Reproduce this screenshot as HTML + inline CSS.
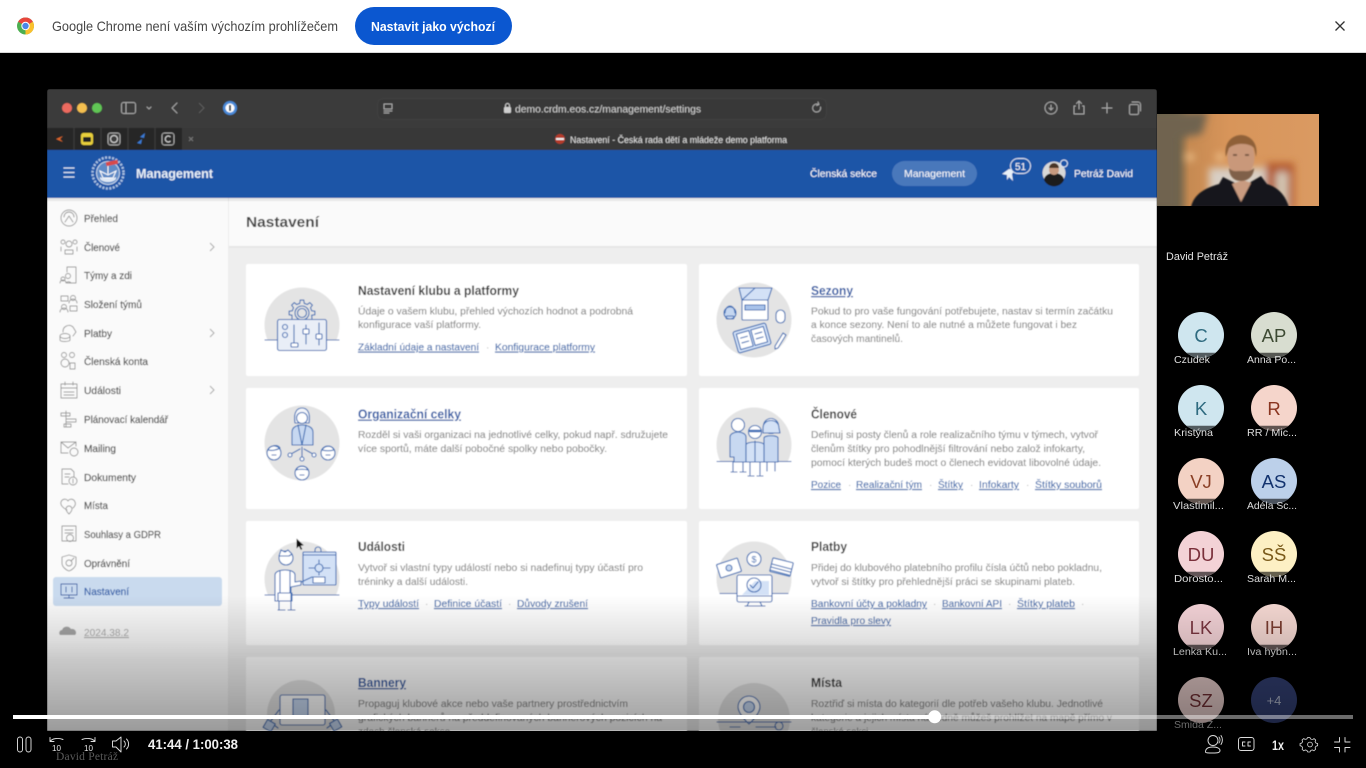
<!DOCTYPE html>
<html lang="cs"><head><meta charset="utf-8"><title>Nastavení</title>
<style>
html,body{margin:0;padding:0;background:#000;width:1366px;height:768px;overflow:hidden}
svg{display:block;position:absolute;left:0;top:0}
text{font-family:"Liberation Sans",sans-serif;white-space:pre}
.t{font-size:13px;font-weight:700;fill:#3a3a3a}
.tl{font-size:13px;font-weight:700;fill:#2f5ca6;text-decoration:underline}
.d{font-size:10.5px;fill:#8b8b8b;stroke:#8b8b8b;stroke-width:.12}
.l{font-size:10.5px;fill:#3a68ab;text-decoration:underline;stroke:#3a68ab;stroke-width:.12}
.o{font-size:10px;fill:#b5b5b5}
.s{font-size:10.5px;fill:#4d4d4d;stroke:#4d4d4d;stroke-width:.18}
.n{font-size:10.5px;fill:#dedede}
.i{font-size:18.5px;text-anchor:middle}
.w{font-size:10.5px;fill:#fff}
.ic{fill:none;stroke:#3f6fb5;stroke-width:1.1;stroke-linecap:round;stroke-linejoin:round}
.si{fill:none;stroke:#969696;stroke-width:.9;stroke-linecap:round;stroke-linejoin:round}
.tb{fill:none;stroke:#a8a8a8;stroke-width:1;stroke-linecap:round;stroke-linejoin:round}
.ct{fill:none;stroke:#dcdcdc;stroke-width:.95;stroke-linecap:round;stroke-linejoin:round}
</style></head><body>
<svg width="1366" height="768" viewBox="0 0 1366 768" xmlns="http://www.w3.org/2000/svg">
<defs>
<clipPath id="scr"><path d="M50 89H1154Q1157 89 1157 92V731H47V92Q47 89 50 89Z"/></clipPath>
<clipPath id="dome5"><rect x="260" y="530" width="85" height="65"/></clipPath>
<clipPath id="dome6"><rect x="712" y="530" width="85" height="64"/></clipPath>
<clipPath id="dome1"><rect x="260" y="280" width="85" height="60"/></clipPath>
<clipPath id="dome4"><rect x="712" y="400" width="85" height="62"/></clipPath>
<clipPath id="vid"><rect x="1157" y="114" width="162" height="92"/></clipPath>
<linearGradient id="fade" x1="0" y1="0" x2="0" y2="1"><stop offset="0" stop-color="#000" stop-opacity="0"/><stop offset=".33" stop-color="#000" stop-opacity=".12"/><stop offset=".48" stop-color="#000" stop-opacity=".2"/><stop offset="1" stop-color="#000" stop-opacity=".38"/></linearGradient>
<linearGradient id="bg" x1="0" y1="0" x2="1" y2="0"><stop offset="0" stop-color="#5b5a44"/><stop offset=".12" stop-color="#6f6448"/><stop offset=".2" stop-color="#c68a52"/><stop offset=".45" stop-color="#d8955a"/><stop offset="1" stop-color="#da9a62"/></linearGradient>
<filter id="b1" x="-5%" y="-5%" width="110%" height="110%"><feGaussianBlur stdDeviation=".45"/></filter>
<filter id="b6" x="-30%" y="-30%" width="160%" height="160%"><feGaussianBlur stdDeviation="4"/></filter>
<filter id="b1v" x="-10%" y="-10%" width="120%" height="120%"><feGaussianBlur stdDeviation=".8"/></filter>
</defs>

<rect width="1366" height="768" fill="#000"/>
<!-- Chrome infobar -->
<rect width="1366" height="52" fill="#fff"/><rect y="52" width="1366" height="1" fill="#d8d8d8"/>
<g transform="translate(25.5 26)">
<circle r="8.5" fill="#4caf50"/><path d="M0-8.5A8.5 8.5 0 0 1 7.4-4.2L0 0-7.4-4.2A8.5 8.5 0 0 1 0-8.5Z" fill="#e8453c"/><path d="M7.4-4.2A8.5 8.5 0 0 1 0 8.5L0 0Z" fill="#fbc02d"/><circle r="4.2" fill="#fff"/><circle r="3.2" fill="#4a86e8"/>
</g>
<text x="52" y="31" font-size="14" fill="#474747" textLength="286" lengthAdjust="spacingAndGlyphs">Google Chrome není vaším výchozím prohlížečem</text>
<rect x="355" y="7" width="157" height="38" rx="19" fill="#0b57d0"/>
<text x="371" y="31" font-size="13" font-weight="700" fill="#fff" textLength="124" lengthAdjust="spacingAndGlyphs">Nastavit jako výchozí</text>
<path d="M1335.5 21.5l9 9m0-9l-9 9" stroke="#333" stroke-width="1.3" fill="none"/>

<!-- Screen share -->
<g clip-path="url(#scr)"><g filter="url(#b1)">
<rect x="47" y="89" width="1110" height="642" fill="#eee"/>
<rect x="47" y="89" width="1110" height="39" fill="#3a3a3a"/>
<rect x="47" y="128" width="1110" height="22" fill="#383838"/>
<rect x="47" y="128" width="135" height="22" fill="#282828"/>
<path d="M74 128v22M101 128v22M128 128v22M155 128v22" stroke="#3c3c3c"/>
<circle cx="67" cy="108" r="5" fill="#ec6a5e"/><circle cx="82" cy="108" r="5" fill="#f4bf4f"/><circle cx="97" cy="108" r="5" fill="#61c554"/>
<rect x="121.500" y="102.500" width="14" height="11" rx="2" class="tb"/><path d="M126 103v10" class="tb"/>
<path d="M147 107l2 2 2-2" class="tb"/><path d="M177 103l-5 5 5 5" class="tb" stroke-width="1.3"/><path d="M199 103l5 5-5 5" fill="none" stroke="#5e5e5e"/>
<circle cx="230" cy="108" r="7" fill="#4a8ad8"/><circle cx="230" cy="108" r="4.500" fill="#fff"/><rect x="229" y="105" width="2" height="6" fill="#234"/>
<rect x="377.500" y="98.500" width="449" height="21" rx="6" fill="#393939" stroke="#424242"/>
<path d="M384 104h8v5h-8zM384 111h8M384 113h5" class="tb" stroke-width=".8"/>
<rect x="504" y="107" width="7" height="6" rx="1" fill="#cfcfcf"/><path d="M505.500 107v-1.500a2 2 0 0 1 4 0V107" fill="none" stroke="#cfcfcf"/>
<text x="515" y="112.500" font-size="10.500" fill="#d0d0d0" textLength="186" lengthAdjust="spacingAndGlyphs">demo.crdm.eos.cz/management/settings</text>
<path d="M820.500 107a4 4 0 1 1-2-2.500M818 102l1 2.500-2.500 1" class="tb" stroke-width=".9"/>
<circle cx="1051" cy="108" r="6" class="tb"/><path d="M1051 105v5m-2-2l2 2 2-2" class="tb" stroke-width=".8"/>
<path d="M1075.500 106h-1.500v8h10v-8h-1.500M1079 109v-8m-2.500 2.500l2.500-2.500 2.500 2.500" class="tb"/>
<path d="M1107 103v10m-5-5h10" class="tb"/>
<rect x="1129.500" y="104.500" width="9" height="10" rx="1.500" class="tb"/><path d="M1132 102h6a2.500 2.500 0 0 1 2.500 2.500V111" class="tb"/>
<path d="M56 139l7-3-3 3 3 3z" fill="#e0682a"/>
<rect x="81" y="133" width="12" height="12" rx="2.500" fill="#e8cf3a"/><rect x="83" y="137" width="8" height="5" rx="1" fill="#222"/>
<rect x="108" y="133" width="12" height="12" rx="2.500" fill="#3c3c3c" stroke="#aaa"/><circle cx="114" cy="139" r="3.500" fill="none" stroke="#ddd"/>
<path d="M137 143l5-4-1 5zM140 137l5-4-1 5z" fill="#3a7bd5"/>
<rect x="162" y="133" width="12" height="12" rx="2.500" fill="#2a2a2a" stroke="#aaa"/><path d="M170.500 137a3 3 0 1 0 0 4" fill="none" stroke="#ddd"/>
<path d="M189 137l4 4m0-4l-4 4" stroke="#777" fill="none"/>
<circle cx="560" cy="139" r="5" fill="#b63a2c"/><rect x="556" y="138" width="8" height="2" fill="#eee"/>
<text x="570" y="143" font-size="9" fill="#e3e3e3" textLength="217" lengthAdjust="spacingAndGlyphs">Nastavení - Česká rada dětí a mládeže demo platforma</text>

<!-- blue header -->
<rect x="47" y="150" width="1110" height="48" fill="#1c55a7"/>
<path d="M63.500 168h11M63.500 172.500h11M63.500 177h11" stroke="#dfe8f5" stroke-width="1.300" fill="none"/>
<circle cx="108" cy="173" r="11.500" fill="#5f8ac6" stroke="#c9d8ec"/><circle cx="108" cy="173" r="15.500" fill="none" stroke="#a9c1e2" stroke-width="2.500" stroke-dasharray="2 1.500"/>
<path d="M100 171l8 4 8-4-3 7h-10zM108 164v10" fill="none" stroke="#fff"/><path d="M100 177c3 2 13 2 16 0v2c-3 4-13 4-16 0z" fill="#dfe8f5"/>
<rect x="106" y="161" width="12" height="4" fill="#d8484a" transform="rotate(-12 112 163)"/>
<text x="136" y="178" font-size="13" font-weight="700" fill="#e8eff8" textLength="77" lengthAdjust="spacingAndGlyphs">Management</text>
<text x="810" y="177" class="w" textLength="67" lengthAdjust="spacingAndGlyphs">Členská sekce</text>
<rect x="892" y="161" width="85" height="25" rx="12.500" fill="#4a78bb"/>
<text x="904" y="177" class="w" textLength="61" lengthAdjust="spacingAndGlyphs">Management</text>
<path d="M1002 174l7-5 6 1-3 4 1 7-4-4-2 3v-5z" fill="#e9f0f8"/>
<rect x="1010.500" y="158.500" width="20" height="15" rx="7.500" fill="#1c55a7" stroke="#dfe8f5"/>
<text x="1020.500" y="170" font-size="10" fill="#fff" text-anchor="middle">51</text>
<circle cx="1054" cy="173" r="11.500" fill="#d8d8d8"/><path d="M1044 180a10 7 0 0 1 20 0 11 11 0 0 1-20 0z" fill="#1d1d1d"/><circle cx="1054" cy="170" r="5" fill="#c79a7f"/><path d="M1049 168a5 5 0 0 1 10 0z" fill="#4a3526"/>
<circle cx="1064" cy="163.500" r="3.500" fill="#1c55a7" stroke="#dfe8f5"/>
<text x="1074" y="177" class="w" textLength="59" lengthAdjust="spacingAndGlyphs">Petráž David</text>

<!-- sidebar -->
<rect x="47" y="198" width="182" height="533" fill="#fafafa"/>
<rect x="228" y="198" width="1" height="533" fill="#ececec"/>
<rect x="229" y="198" width="928" height="48" fill="#fafafa"/>
<rect x="229" y="246" width="928" height="2" fill="#e6e6e6"/>
<rect x="47" y="198" width="1110" height="3" fill="#000" opacity=".07"/>
<text x="246" y="227" font-size="15" font-weight="700" fill="#444" textLength="73" lengthAdjust="spacingAndGlyphs">Nastavení</text>

<text x="84" y="222" class="s" textLength="34" lengthAdjust="spacingAndGlyphs">Přehled</text>
<text x="84" y="251" class="s" textLength="36" lengthAdjust="spacingAndGlyphs">Členové</text>
<text x="84" y="279" class="s" textLength="48" lengthAdjust="spacingAndGlyphs">Týmy a zdi</text>
<text x="84" y="308" class="s" textLength="58" lengthAdjust="spacingAndGlyphs">Složení týmů</text>
<text x="84" y="337" class="s" textLength="28" lengthAdjust="spacingAndGlyphs">Platby</text>
<text x="84" y="365" class="s" textLength="64" lengthAdjust="spacingAndGlyphs">Členská konta</text>
<text x="84" y="394" class="s" textLength="37" lengthAdjust="spacingAndGlyphs">Události</text>
<text x="84" y="423" class="s" textLength="84" lengthAdjust="spacingAndGlyphs">Plánovací kalendář</text>
<text x="84" y="452" class="s" textLength="32" lengthAdjust="spacingAndGlyphs">Mailing</text>
<text x="84" y="481" class="s" textLength="52" lengthAdjust="spacingAndGlyphs">Dokumenty</text>
<text x="84" y="509" class="s" textLength="24" lengthAdjust="spacingAndGlyphs">Místa</text>
<text x="84" y="538" class="s" textLength="77" lengthAdjust="spacingAndGlyphs">Souhlasy a GDPR</text>
<text x="84" y="567" class="s" textLength="46" lengthAdjust="spacingAndGlyphs">Oprávnění</text>
<rect x="53" y="577" width="169" height="29" rx="3" fill="#c9daee"/>
<text x="84" y="595" class="s" style="fill:#2a5ba8;stroke:#2a5ba8" textLength="45" lengthAdjust="spacingAndGlyphs">Nastavení</text>
<path d="M210 243l4 4-4 4M210 329l4 4-4 4M210 386l4 4-4 4" fill="none" stroke="#aaa"/>
<g class="si">
<g transform="translate(69 218)"><circle r="8"/><path d="M-4 4l4-6 4 6M-5-1a5 5 0 0 1 10 0"/></g>
<g transform="translate(69 247)"><circle cy="-3" r="3"/><circle cx="-6" cy="-5" r="2"/><circle cx="6" cy="-5" r="2"/><path d="M-4 7v-4h8v4zM-8 4v-4M8 4v-4"/></g>
<g transform="translate(69 275)"><path d="M-2-8H7V8H-2M-2-8v5"/><circle cx="-1" cy="1" r="2.500"/><circle cx="-6" cy="4" r="2"/><path d="M-9 8a3 3 0 0 1 6 0M-3 8a3 3 0 0 1 5 0"/></g>
<g transform="translate(69 304)"><rect x="-8" y="-8" width="7" height="5"/><circle cx="4" cy="-6" r="2.500"/><path d="M0-1a4 4 0 0 1 8 0"/><circle cx="-5" cy="3" r="2.500"/><path d="M-9 8a4 4 0 0 1 8 0"/><rect x="1" y="2" width="7" height="5"/></g>
<g transform="translate(69 333)"><ellipse cx="-4" cy="3" rx="5" ry="2.500"/><path d="M-9 3v4c0 2 10 2 10 0V3M-6-1a6 6 0 0 1 10-5l3 5-3 4"/></g>
<g transform="translate(69 361)"><circle cx="-5" cy="-6" r="2.500"/><circle cx="3" cy="-6" r="2.500"/><circle cx="-4" cy="2" r="4"/><path d="M1 8V2h5v6z"/></g>
<g transform="translate(69 390)"><rect x="-8" y="-6" width="16" height="14"/><path d="M-8-2H8M-4-8v3M4-8v3M-5 2h10M-5 5h10"/></g>
<g transform="translate(69 419)"><path d="M-3-8V8M-8-6H1v3H-8zM-3 0H7v3H-3zM-5 5H2v3H-5z"/></g>
<g transform="translate(69 448)"><path d="M-8 5V-6H7v4M-8-6l7 6 8-6M-8 5h7"/><circle cx="5" cy="4" r="4"/></g>
<g transform="translate(69 477)"><path d="M-7 7V-8H2l3 3V0M-7 7H-1M-4-3h5M-4 0h4"/><circle cx="4" cy="4" r="4"/><path d="M4 2v4"/></g>
<g transform="translate(69 505)"><path d="M-2 5c-4-2-7-5-6-8s5-4 7-1c2-3 6-2 7 1 1 2 0 4-2 6"/><path d="M0 1a3 3 0 0 1 3 3c0 2-3 5-3 5s-3-3-3-5a3 3 0 0 1 3-3z"/></g>
<g transform="translate(69 534)"><rect x="-7" y="-8" width="14" height="15"/><path d="M-4-4h8M-4-1h8"/><circle cx="1" cy="4" r="3.500"/></g>
<g transform="translate(69 563)"><path d="M0-8l7 2v6c0 4-4 7-7 8-3-1-7-4-7-8v-6z"/><circle r="3"/><path d="M2-2l3-3"/></g>
<g transform="translate(69 591)" style="stroke:#2f5ca6"><rect x="-8" y="-7" width="16" height="11"/><path d="M-3-4v5M3-4v5M-5 7H5M0 4v3"/></g>
</g>
<path d="M60 635a3 3 0 0 1 2-5 5 5 0 0 1 9-1 4 4 0 0 1 5 3 3 3 0 0 1-1 3z" fill="#a5a5a5"/>
<text x="84" y="636" font-size="10.500" fill="#a5a5a5" text-decoration="underline" textLength="45" lengthAdjust="spacingAndGlyphs">2024.38.2</text>

<!-- cards -->
<g fill="#fff">
<rect x="246" y="264" width="441" height="112" rx="2"/><rect x="699" y="264" width="440" height="112" rx="2"/>
<rect x="246" y="388" width="441" height="121" rx="2"/><rect x="699" y="388" width="440" height="121" rx="2"/>
<rect x="246" y="521" width="441" height="124" rx="2"/><rect x="699" y="521" width="440" height="124" rx="2"/>
<rect x="246" y="657" width="441" height="90" rx="2"/><rect x="699" y="657" width="440" height="90" rx="2"/>
</g>

<text x="358" y="295" class="t" textLength="161" lengthAdjust="spacingAndGlyphs">Nastavení klubu a platformy</text>
<text x="358" y="314.500" class="d" textLength="275" lengthAdjust="spacingAndGlyphs">Údaje o vašem klubu, přehled výchozích hodnot a podrobná</text>
<text x="358" y="328" class="d" textLength="123" lengthAdjust="spacingAndGlyphs">konfigurace vaší platformy.</text>
<text x="358" y="350.500" class="l" textLength="121" lengthAdjust="spacingAndGlyphs">Základní údaje a nastavení</text>
<text x="486" y="350.500" class="o">·</text>
<text x="495" y="350.500" class="l" textLength="100" lengthAdjust="spacingAndGlyphs">Konfigurace platformy</text>

<text x="811" y="295" class="tl" textLength="42" lengthAdjust="spacingAndGlyphs">Sezony</text>
<text x="811" y="314.500" class="d" textLength="302" lengthAdjust="spacingAndGlyphs">Pokud to pro vaše fungování potřebujete, nastav si termín začátku</text>
<text x="811" y="328" class="d" textLength="266" lengthAdjust="spacingAndGlyphs">a konce sezony. Není to ale nutné a můžete fungovat i bez</text>
<text x="811" y="342" class="d" textLength="92" lengthAdjust="spacingAndGlyphs">časových mantinelů.</text>

<text x="358" y="418.500" class="tl" textLength="103" lengthAdjust="spacingAndGlyphs">Organizační celky</text>
<text x="358" y="438" class="d" textLength="310" lengthAdjust="spacingAndGlyphs">Rozděl si vaši organizaci na jednotlivé celky, pokud např. sdružujete</text>
<text x="358" y="452" class="d" textLength="249" lengthAdjust="spacingAndGlyphs">více sportů, máte další pobočné spolky nebo pobočky.</text>

<text x="811" y="418.500" class="t" textLength="46" lengthAdjust="spacingAndGlyphs">Členové</text>
<text x="811" y="438" class="d" textLength="287" lengthAdjust="spacingAndGlyphs">Definuj si posty členů a role realizačního týmu v týmech, vytvoř</text>
<text x="811" y="452" class="d" textLength="274" lengthAdjust="spacingAndGlyphs">členům štítky pro pohodlnější filtrování nebo založ infokarty,</text>
<text x="811" y="466" class="d" textLength="290" lengthAdjust="spacingAndGlyphs">pomocí kterých budeš moct o členech evidovat libovolné údaje.</text>
<text x="811" y="488" class="l" textLength="30" lengthAdjust="spacingAndGlyphs">Pozice</text><text x="848" y="488" class="o">·</text>
<text x="856" y="488" class="l" textLength="66" lengthAdjust="spacingAndGlyphs">Realizační tým</text><text x="929" y="488" class="o">·</text>
<text x="938" y="488" class="l" textLength="25" lengthAdjust="spacingAndGlyphs">Štítky</text><text x="970" y="488" class="o">·</text>
<text x="979" y="488" class="l" textLength="40" lengthAdjust="spacingAndGlyphs">Infokarty</text><text x="1026" y="488" class="o">·</text>
<text x="1035" y="488" class="l" textLength="67" lengthAdjust="spacingAndGlyphs">Štítky souborů</text>

<text x="358" y="551" class="t" textLength="47" lengthAdjust="spacingAndGlyphs">Události</text>
<text x="358" y="571" class="d" textLength="285" lengthAdjust="spacingAndGlyphs">Vytvoř si vlastní typy událostí nebo si nadefinuj typy účastí pro</text>
<text x="358" y="585" class="d" textLength="110" lengthAdjust="spacingAndGlyphs">tréninky a další události.</text>
<text x="358" y="607" class="l" textLength="61" lengthAdjust="spacingAndGlyphs">Typy událostí</text><text x="425" y="607" class="o">·</text>
<text x="434" y="607" class="l" textLength="68" lengthAdjust="spacingAndGlyphs">Definice účastí</text><text x="508" y="607" class="o">·</text>
<text x="517" y="607" class="l" textLength="71" lengthAdjust="spacingAndGlyphs">Důvody zrušení</text>

<text x="811" y="551" class="t" textLength="36" lengthAdjust="spacingAndGlyphs">Platby</text>
<text x="811" y="571" class="d" textLength="291" lengthAdjust="spacingAndGlyphs">Přidej do klubového platebního profilu čísla účtů nebo pokladnu,</text>
<text x="811" y="585" class="d" textLength="264" lengthAdjust="spacingAndGlyphs">vytvoř si štítky pro přehlednější práci se skupinami plateb.</text>
<text x="811" y="607" class="l" textLength="116" lengthAdjust="spacingAndGlyphs">Bankovní účty a pokladny</text><text x="933" y="607" class="o">·</text>
<text x="942" y="607" class="l" textLength="60" lengthAdjust="spacingAndGlyphs">Bankovní API</text><text x="1008" y="607" class="o">·</text>
<text x="1017" y="607" class="l" textLength="58" lengthAdjust="spacingAndGlyphs">Štítky plateb</text><text x="1081" y="607" class="o">·</text>
<text x="811" y="624" class="l" textLength="80" lengthAdjust="spacingAndGlyphs">Pravidla pro slevy</text>

<text x="358" y="687" class="tl" textLength="48" lengthAdjust="spacingAndGlyphs">Bannery</text>
<text x="358" y="707" class="d" textLength="270" lengthAdjust="spacingAndGlyphs">Propaguj klubové akce nebo vaše partnery prostřednictvím</text>
<text x="358" y="721" class="d" textLength="304" lengthAdjust="spacingAndGlyphs">grafických bannerů na předdefinovaných bannerových pozicích na</text>
<text x="358" y="735" class="d" textLength="95" lengthAdjust="spacingAndGlyphs">zdech členská sekce.</text>

<text x="811" y="687" class="t" textLength="31" lengthAdjust="spacingAndGlyphs">Místa</text>
<text x="811" y="707" class="d" textLength="292" lengthAdjust="spacingAndGlyphs">Roztřiď si místa do kategorií dle potřeb vašeho klubu. Jednotlivé</text>
<text x="811" y="721" class="d" textLength="301" lengthAdjust="spacingAndGlyphs">kategorie a jejich místa následně můžeš prohlížet na mapě přímo v</text>
<text x="811" y="735" class="d" textLength="60" lengthAdjust="spacingAndGlyphs">členské sekci.</text>

<!-- illustrations -->
<circle cx="302" cy="325" r="37.500" fill="#e4e4e4" clip-path="url(#dome1)"/>
<g class="ic">
<path d="M265 340H339"/>
<path d="M292 319V315.200L289.100 314.800V311.200L292.300 310.800L293.500 307.700L291.600 305.200L294.200 302.600L296.700 304.500L299.800 303.300L300.200 300.100H303.800L304.200 303.300L307.300 304.500L309.800 302.600L312.400 305.200L310.500 307.700L311.700 310.800L314.900 311.200V314.800L311.700 315.200L312 319"/>
<circle cx="302" cy="313" r="7"/><circle cx="302" cy="313" r="4.500"/>
<rect x="277.500" y="319.500" width="49" height="31" rx="2" fill="#e9eef7"/>
<circle cx="285" cy="327" r="2.500"/><circle cx="285" cy="335" r="2.500"/>
<path d="M294 325v19M306 325v19M319 323v22"/>
<rect x="291" y="343" width="7" height="4" rx="1" fill="#fff"/><rect x="303" y="329" width="6" height="5" rx="1" fill="#fff"/><rect x="316" y="334" width="6" height="5" rx="1" fill="#fff"/>
</g>

<circle cx="754" cy="320" r="37.500" fill="#e4e4e4"/>
<g class="ic">
<path d="M739 288h33l-4 12h-26z" fill="#d3e1f6"/><path d="M755 288l-13 12" />
<rect x="742" y="300" width="26" height="20" rx="1" fill="#fff"/><rect x="745" y="305" width="20" height="5" fill="#a9c3ea"/>
<circle cx="730" cy="313" r="6" fill="#c4d6f0"/><path d="M725 313a5 7 0 0 1 10 0"/><rect x="726" y="316" width="8" height="3" rx="1.500"/>
<rect x="776" y="310" width="9" height="13" rx="4.500" fill="#fff"/>
<g transform="rotate(-16 752 338)"><rect x="735" y="327" width="34" height="22" rx="2" fill="#d3e1f6"/><rect x="738" y="330" width="13" height="16" fill="#fff"/><rect x="753" y="330" width="13" height="16" fill="#fff"/><path d="M741 335h7M741 340h7M756 335h7M756 340h7"/></g>
<path d="M775 346l8-13 3 2-8 13-3 1z" fill="#fff"/>
</g>

<circle cx="302" cy="443" r="37.500" fill="#e4e4e4"/>
<g class="ic">
<path d="M295 423c-2-12 3-15 7-15s9 3 7 15z" fill="#f4f6fa"/><circle cx="302" cy="418" r="5.500" fill="#fff"/>
<path d="M292 445v-13c0-5 5-7 10-7s11 2 11 7v13z" fill="#c7d8f1"/><path d="M298 425l4 20 4-20"/>
<circle cx="274" cy="453" r="7" fill="#fff"/><path d="M268 450c2-5 10-6 12-2-3 2-8 3-12 2z"/><path d="M272 455h4"/>
<circle cx="328" cy="453" r="7" fill="#fff"/><path d="M322 450c3-5 10-5 12 0-4 1-8 1-12 0z"/><path d="M326 455h4"/>
<circle cx="302" cy="473" r="7" fill="#fff"/><path d="M296 470c2-5 10-5 12 0-3-1-9-1-12 0z"/><path d="M300 475h4"/>
<path d="M302 447v10M300 449l-9 5M304 449l9 5"/><circle cx="290" cy="455" r="2" fill="#fff"/><circle cx="314" cy="455" r="2" fill="#fff"/><circle cx="302" cy="459" r="2" fill="#fff"/>
</g>

<circle cx="754" cy="445" r="37.500" fill="#e4e4e4" clip-path="url(#dome4)"/>
<g class="ic">
<path d="M717 461.500H791"/>
<circle cx="738" cy="425" r="6.500" fill="#fff"/>
<path d="M730 457v-20c0-3 4-5 8-5s8 2 8 5v25h-12v-5z" fill="#c7d8f1"/><path d="M733 462v10M743 462v10M731 472h6M740 472h6"/>
<circle cx="771" cy="426" r="7.500" fill="#fff"/><path d="M763 428c0-10 16-10 16 0l1 5h-17z" fill="#d3e1f6"/>
<path d="M764 462v-24c0-3 14-3 14 0v24z" fill="#c7d8f1"/><path d="M767 462v9M775 462v9"/>
<circle cx="755" cy="432" r="6.500" fill="#fff"/><path d="M750 431h10" stroke-width="2.500"/>
<path d="M746 462v-17c0-4 18-4 18 0v17z" fill="#d3e1f6"/><path d="M750 462v13M760 462v13M755 441v21M748 476h6M757 476h6"/>
</g>

<circle cx="302" cy="579" r="37.500" fill="#e4e4e4" clip-path="url(#dome5)"/>
<g class="ic">
<path d="M265 595H339"/>
<path d="M315 552v-2a3 3 0 0 1 6 0v2M312 552h12" />
<rect x="303" y="552" width="33" height="33" rx="1" fill="#d3e1f6"/><path d="M303 555h33"/>
<circle cx="319" cy="568" r="4" fill="none"/><path d="M309 568h5M324 568h6M319 560v3M319 573v2"/><rect x="313" y="577" width="12" height="6" fill="#fff"/>
<path d="M295 585l17-8"/>
<circle cx="286" cy="558" r="7" fill="#fff"/><path d="M279 556l2-6 4 2 3-2 4 4-3 2h-9z" fill="#fff"/>
<path d="M275 587v-12c0-3 4-5 10-5s10 2 10 5v7l6-1v4l-10 2v14h-16z" fill="#fff"/><path d="M280 571v22M290 571v22"/>
<path d="M278 593h14v8h-14zM279 601v9M291 601v9M278 610h7M288 610h7"/>
</g>

<circle cx="754" cy="579" r="37.500" fill="#e4e4e4" clip-path="url(#dome6)"/>
<g class="ic">
<path d="M720 593.500H788"/>
<circle cx="754" cy="559" r="7" fill="#fff"/><text x="754" y="562.500" text-anchor="middle" fill="#3f6fb5" stroke="none" style="font-size:9px">$</text>
<rect x="718" y="561" width="22" height="14" rx="1" fill="#fff" transform="rotate(-18 729 568)"/><circle cx="729" cy="568" r="3" fill="#c7d8f1"/>
<rect x="771" y="560" width="21" height="14" rx="1" fill="#fff" transform="rotate(14 781 567)"/><path d="M772 564l19 5M771 567l19 5M770 570l19 5"/>
<rect x="737" y="575" width="35" height="27" rx="2" fill="#fff"/><path d="M737 596h35M749 602l-2 4M760 602l2 4M745 606h20"/>
<path d="M742 595l13-14h14v14z" fill="#d3e1f6" stroke="none"/>
<circle cx="754" cy="585" r="7"/><path d="M750 585l3 3 5-6"/>
</g>

<circle cx="301" cy="714" r="34" fill="#e4e4e4"/>
<g class="ic">
<rect x="280" y="695" width="45" height="30" rx="2" fill="#fff"/><rect x="293" y="699" width="15" height="18" fill="#c7d8f1"/>
<path d="M279 710l-9 12 8 6M326 710l9 12-8 6"/>
<rect x="265" y="721" width="9" height="9" transform="rotate(30 269 725)" fill="#c7d8f1"/><rect x="331" y="721" width="9" height="9" transform="rotate(-30 335 725)" fill="#c7d8f1"/>
</g>

<circle cx="754" cy="719" r="36" fill="#e4e4e4"/>
<g class="ic">
<path d="M738 707a11 11 0 0 1 22 0c0 7-11 17-11 17s-11-10-11-17z" fill="#fff"/><circle cx="749" cy="707" r="5.500" fill="#c7d8f1"/>
<path d="M717 722H791"/><path d="M730 727h10M756 727h20"/><circle cx="779" cy="726" r="4"/>
</g>

<path d="M296.500 538.500v10l2.500-2.200 1.800 3.600 1.500-.8-1.700-3.400 3.300-.3z" fill="#111"/>
<rect x="47" y="595" width="1110" height="136" fill="url(#fade)"/>
</g></g>

<!-- Speaker video -->
<g clip-path="url(#vid)">
<rect x="1157" y="114" width="162" height="92" fill="url(#bg)"/>
<g filter="url(#b6)">
<path d="M1150 112h58l-6 22-22 4v72h-30z" fill="#6f6350"/>
<circle cx="1190" cy="157" r="4" fill="#f0c48e"/>
<circle cx="1220" cy="157" r="4" fill="#f0c48e"/>
<rect x="1209" y="168" width="71" height="40" fill="#d8cfc4"/>
<rect x="1266" y="163" width="28" height="46" fill="#b2582a"/>
<rect x="1276" y="172" width="12" height="36" fill="#d3c6b4"/>
</g>
<g filter="url(#b1v)">
<path d="M1191 207c3-13 14-19 28-23l4-7 12 6h14l12-7 6 8c10 3 18 10 22 23z" fill="#14141a"/>
<path d="M1232 184l9 18 10-19-8-3z" fill="#c99b80"/>
<ellipse cx="1241" cy="157" rx="13.500" ry="20" fill="#c9987a"/>
<path d="M1226 157c-3-15 7-22 15-22s18 7 15 22l-2-9c-4-5-18-6-25 0z" fill="#8f6138"/>
<path d="M1229 168c4 4 6 3 12 3s9 1 13-3c0 7-5 13-13 13s-12-6-12-13z" fill="#7f6148"/>
<path d="M1233 155h4M1245 155h4" stroke="#5a3d2c" stroke-width="1.500"/>
</g>
</g>
<text x="1166" y="260" font-size="11" fill="#e4e4e4" textLength="62" lengthAdjust="spacingAndGlyphs">David Petráž</text>

<!-- Attendees -->
<g>
<circle cx="1201" cy="335" r="23" fill="#cfe6ef"/><text x="1201" y="342" class="i" fill="#2f6b80">C</text>
<circle cx="1274" cy="335" r="23" fill="#d8ddd0"/><text x="1274" y="342" class="i" fill="#3d4a33">AP</text>
<circle cx="1201" cy="408" r="23" fill="#cfe6ef"/><text x="1201" y="415" class="i" fill="#2f6b80">K</text>
<circle cx="1274" cy="408" r="23" fill="#f5d5cb"/><text x="1274" y="415" class="i" fill="#8a3520">R</text>
<circle cx="1201" cy="481" r="23" fill="#f3d2c4"/><text x="1201" y="488" class="i" fill="#8a3f25">VJ</text>
<circle cx="1274" cy="481" r="23" fill="#bcd0ea"/><text x="1274" y="488" class="i" fill="#12326e">AS</text>
<circle cx="1201" cy="554" r="23" fill="#f3d2d6"/><text x="1201" y="561" class="i" fill="#7a2f3a">DU</text>
<circle cx="1274" cy="554" r="23" fill="#fdf0c4"/><text x="1274" y="561" class="i" fill="#7a5a1a">SŠ</text>
<circle cx="1201" cy="627" r="23" fill="#f3d2d6"/><text x="1201" y="634" class="i" fill="#7a3540">LK</text>
<circle cx="1274" cy="627" r="23" fill="#f5d8d2"/><text x="1274" y="634" class="i" fill="#7a3c30">IH</text>
<circle cx="1201" cy="700" r="23" fill="#d8bfbd"/><text x="1201" y="707" class="i" fill="#6a2c30">SZ</text>
<circle cx="1274" cy="700" r="23" fill="#2f3b6b"/><text x="1274" y="705" font-size="13" fill="#a8aec0" text-anchor="middle">+4</text>
</g>
<g fill="#000" opacity=".6">
<path d="M1186.500 352.800a23 23 0 0 0 29 0zM1259.500 352.800a23 23 0 0 0 29 0zM1186.500 425.800a23 23 0 0 0 29 0zM1259.500 425.800a23 23 0 0 0 29 0zM1186.500 498.800a23 23 0 0 0 29 0zM1259.500 498.800a23 23 0 0 0 29 0zM1186.500 571.800a23 23 0 0 0 29 0zM1259.500 571.800a23 23 0 0 0 29 0zM1186.500 644.800a23 23 0 0 0 29 0zM1259.500 644.800a23 23 0 0 0 29 0z"/>
</g>
<text x="1174" y="363" class="n" textLength="36" lengthAdjust="spacingAndGlyphs">Czudek</text>
<text x="1247" y="363" class="n" textLength="49" lengthAdjust="spacingAndGlyphs">Anna Po...</text>
<text x="1174" y="436" class="n" textLength="39" lengthAdjust="spacingAndGlyphs">Kristýna</text>
<text x="1247" y="436" class="n" textLength="50" lengthAdjust="spacingAndGlyphs">RR / Mic...</text>
<text x="1173" y="509" class="n" textLength="51" lengthAdjust="spacingAndGlyphs">Vlastimil...</text>
<text x="1247" y="509" class="n" textLength="50" lengthAdjust="spacingAndGlyphs">Adéla Sc...</text>
<text x="1174" y="582" class="n" textLength="49" lengthAdjust="spacingAndGlyphs">Dorosto...</text>
<text x="1247" y="582" class="n" textLength="49" lengthAdjust="spacingAndGlyphs">Sarah M...</text>
<text x="1173" y="655" class="n" textLength="54" lengthAdjust="spacingAndGlyphs">Lenka Ku...</text>
<text x="1247" y="655" class="n" textLength="50" lengthAdjust="spacingAndGlyphs">Iva hybn...</text>
<text x="1174" y="728" class="n" style="fill:#a8a8a8" textLength="48" lengthAdjust="spacingAndGlyphs">Smida Z...</text>
<rect x="1157" y="595" width="209" height="136" fill="url(#fade)"/>

<!-- Progress -->
<rect x="935" y="715" width="418" height="4" fill="#fff" opacity=".42"/>
<rect x="13" y="715" width="922" height="4" fill="#fff"/>
<circle cx="934.700" cy="716.800" r="6.500" fill="#fff"/>

<!-- Controls -->
<g class="ct">
<rect x="17.500" y="737" width="5" height="15" rx="2.500"/><rect x="26" y="737" width="5" height="15" rx="2.500"/>
<path d="M50 741.500c2-3 8-4 13-2M50 737.500v4h4"/>
<path d="M95 741.500c-2-3-8-4-13-2M95 737.500v4h-4"/>
<path d="M112.500 741v6h3.500l5 5V737l-5 4zM124 741a4 4 0 0 1 0 6M126.500 739a7 7 0 0 1 0 10"/>
<rect x="1238.500" y="737.500" width="15.500" height="13" rx="2.500"/>
<path d="M1245 742h-2.500v4h2.500M1250.500 742H1248v4h2.500"/>
<circle cx="1213" cy="740.500" r="5"/><path d="M1205.500 752c0-3.500 3-5 7.500-5s7 1.500 7 3.500-2 2.500-7 2.500-7.500 0-7.500-1zM1219 737a5 5 0 0 1 0 6M1221 735.500a8 8 0 0 1 0 9"/>
<g transform="translate(1310 744.500) scale(.85) translate(-1310 -744.500)"><path d="M1310 736.500l1.200 1.800 2.300.2 1.200-1 2 1.800-.7 1.800 1 1.700 2 .5v2.600l-2 .6-1 1.700.6 1.900-2 1.800-1.600-1-2 .5-1 1.900h-2.700l-1-1.900-2-.5-1.600 1-2-1.800.6-1.900-1-1.700-2-.6v-2.600l2-.5 1-1.700-.7-1.800 2-1.800 1.600 1 2-.5 1.100-1.700z"/><circle cx="1310" cy="744.500" r="2.800"/></g>
<path d="M1339.500 737.500v4.500h-5M1345 737.500v4.500h5M1339.500 752v-4.500h-5M1345 752v-4.500h5"/>
</g>
<text x="52" y="751" font-size="8.500" fill="#e4e4e4" textLength="9" lengthAdjust="spacingAndGlyphs">10</text>
<text x="84" y="751" font-size="8.500" fill="#e4e4e4" textLength="9" lengthAdjust="spacingAndGlyphs">10</text>
<text x="148" y="749" font-size="14" font-weight="700" fill="#f0f0f0" textLength="90" lengthAdjust="spacingAndGlyphs">41:44 / 1:00:38</text>
<text x="56" y="760" style="font-family:'Liberation Serif',serif" font-size="11.500" fill="#5a5a5a" textLength="62">David Petráž</text>
<text x="1272" y="750" font-size="14" font-weight="700" fill="#f0f0f0" textLength="12" lengthAdjust="spacingAndGlyphs">1x</text>
</svg>
</body></html>
